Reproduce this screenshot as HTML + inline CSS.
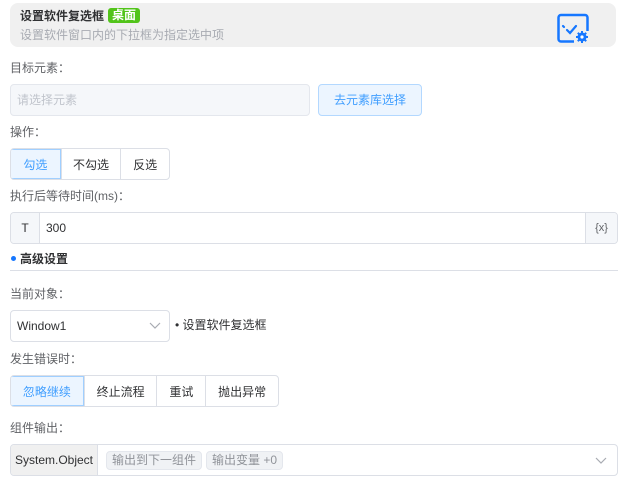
<!DOCTYPE html>
<html><head><meta charset="utf-8"><style>
*{box-sizing:border-box;margin:0;padding:0}
body{width:630px;height:494px;background:#fff;font-family:"Liberation Sans","Noto Sans CJK SC",sans-serif;font-size:12px;color:#606266;position:relative;overflow:hidden}
.a{position:absolute}
.lbl{position:absolute;left:10px;font-size:12px;color:#606266;line-height:14px}
.grp{position:absolute;display:flex;height:32px;border:1px solid #dcdfe6;border-radius:4px;overflow:hidden}
.grp div{display:flex;align-items:center;justify-content:center;border-left:1px solid #dcdfe6;color:#303133}
.grp div:first-child{border-left:none}
.grp .on{background:#ecf5ff;color:#409eff;border:1px solid #a0cfff}
</style></head><body>
<div class="a" style="left:10px;top:3px;width:606px;height:44px;background:#f0f0f0;border-radius:8px"></div>
<div class="a" style="left:20px;top:9px;font-weight:bold;color:#303133;font-size:12px;line-height:14px">设置软件复选框</div>
<div class="a" style="left:108px;top:8px;width:32px;height:15px;background:#52c41a;border-radius:3px;color:#fff;font-size:12px;line-height:15px;text-align:center;font-weight:bold">桌面</div>
<div class="a" style="left:20px;top:28px;color:#a8abb2;font-size:12px;line-height:14px">设置软件窗口内的下拉框为指定选中项</div>
<svg class="a" style="left:556px;top:13px" width="34" height="31" viewBox="0 0 34 31">
<path d="M18 28.5H5a2.5 2.5 0 0 1-2.5-2.5V4.5A2.5 2.5 0 0 1 5 2h24a2.5 2.5 0 0 1 2.5 2.5V18" fill="none" stroke="#1677ff" stroke-width="2.5"/>
<path d="M7 13l1 1M11 17l3 3 6-7" fill="none" stroke="#1677ff" stroke-width="2.2" stroke-linecap="round"/>
<circle cx="26" cy="24" r="4.5" fill="#1677ff"/><circle cx="26" cy="24" r="1.6" fill="#fff"/>
<path d="M26 18v2.5M26 27.5v2.5M20 24h2.5M29.5 24h2.5M21.8 19.8l1.7 1.7M28.5 26.5l1.7 1.7M21.8 28.2l1.7-1.7M28.5 21.5l1.7-1.7" stroke="#1677ff" stroke-width="2"/>
</svg>

<div class="lbl" style="top:61px">目标元素：</div>
<div class="a" style="left:10px;top:84px;width:300px;height:32px;background:#f5f7fa;border:1px solid #e4e7ed;border-radius:4px;color:#c0c4cc;padding:0 6px;line-height:30px">请选择元素</div>
<div class="a" style="left:318px;top:84px;width:104px;height:32px;background:#ecf5ff;border:1px solid #b3d8ff;border-radius:4px;color:#409eff;text-align:center;line-height:30px">去元素库选择</div>

<div class="lbl" style="top:125px">操作：</div>
<div class="grp" style="left:10px;top:148px;width:160px">
<div class="on" style="width:50px">勾选</div><div style="width:60px">不勾选</div><div style="width:49px">反选</div></div>

<div class="lbl" style="top:189px">执行后等待时间(ms)：</div>
<div class="a" style="left:10px;top:212px;width:608px;height:32px;border:1px solid #dcdfe6;border-radius:4px;overflow:hidden">
<div class="a" style="left:0;top:0;width:29px;height:30px;background:#f5f7fa;border-right:1px solid #dcdfe6;text-align:center;line-height:30px;color:#303133">T</div>
<div class="a" style="left:35px;top:0;line-height:30px;color:#303133">300</div>
<div class="a" style="right:0;top:0;width:32px;height:30px;background:#f5f7fa;border-left:1px solid #dcdfe6;text-align:center;line-height:30px;font-size:11px;color:#606266">{x}</div>
</div>

<div class="a" style="left:11px;top:256px;width:5px;height:5px;border-radius:50%;background:#1677ff"></div>
<div class="a" style="left:20px;top:252px;font-weight:bold;color:#303133;line-height:14px">高级设置</div>
<div class="a" style="left:10px;top:270px;width:608px;height:1px;background:#dcdfe6"></div>

<div class="lbl" style="top:287px">当前对象：</div>
<div class="a" style="left:10px;top:310px;width:160px;height:32px;border:1px solid #dcdfe6;border-radius:4px;padding-left:6px;line-height:30px;color:#303133">Window1
<svg class="a" style="right:8px;top:11px" width="12" height="8"><path d="M1 1l5 5 5-5" fill="none" stroke="#a8abb2" stroke-width="1.2"/></svg></div>
<div class="a" style="left:175px;top:318px;color:#303133;line-height:14px">• 设置软件复选框</div>

<div class="lbl" style="top:352px">发生错误时：</div>
<div class="grp" style="left:10px;top:375px;width:269px">
<div class="on" style="width:73px">忽略继续</div><div style="width:73px">终止流程</div><div style="width:49px">重试</div><div style="width:73px">抛出异常</div></div>

<div class="lbl" style="top:421px">组件输出：</div>
<div class="a" style="left:10px;top:444px;width:608px;height:32px;border:1px solid #dcdfe6;border-radius:4px;overflow:hidden">
<div class="a" style="left:0;top:0;width:87px;height:30px;background:#f0f0f0;border-right:1px solid #dcdfe6;text-align:center;line-height:30px;color:#303133">System.Object</div>
<div class="a" style="left:95px;top:6px;height:19px;padding:0 5px;background:#f0f2f5;border:1px solid #e4e7ed;border-radius:4px;line-height:17px;color:#909399">输出到下一组件</div>
<div class="a" style="left:195px;top:6px;height:19px;padding:0 5px;background:#f0f2f5;border:1px solid #e4e7ed;border-radius:4px;line-height:17px;color:#909399">输出变量 +0</div>
<svg class="a" style="right:10px;top:12px" width="12" height="8"><path d="M1 1l5 5 5-5" fill="none" stroke="#a8abb2" stroke-width="1.2"/></svg>
</div>
</body></html>
